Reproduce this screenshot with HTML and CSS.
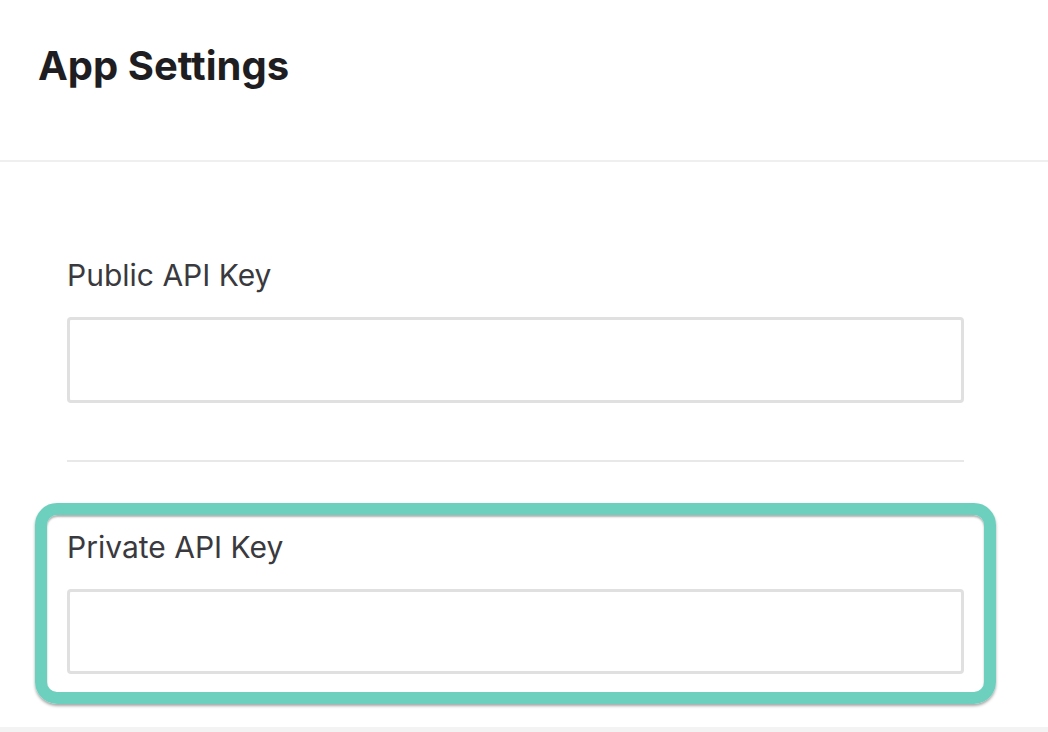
FILE: index.html
```html
<!DOCTYPE html>
<html>
  <head>
    <meta name="viewport" content="width=device-width, initial-scale=1">
    <title>App Settings</title>
    <link rel="stylesheet" href="styles.css">
  </head>
<body>
  <div class="page">

    <div class="header">
      <h1 class="title">App Settings</h1>
    </div>

    <div class="content">
      <div class="field">
        <label class="fieldlabel" for="publickey">Public API Key</label>
        <input class="fieldinput" id="publickey" type="text">
      </div>

      <div class="divider"></div>

      <div class="field focused">
        <label class="fieldlabel" for="privatekey">Private API Key</label>
        <input class="fieldinput" id="privatekey" type="text">
      </div>
    </div>

    <div class="footer"></div>

  </div>
</body>
</html>
```

FILE: styles.css
```css
body, html {margin: 0; padding: 0; background-color: white;}

.page {
  display: flex;
  flex-direction: column;
  height: 732px;
  font-family: Inter, "Liberation Sans", sans-serif;
}

.header {
  box-sizing: border-box;
  height: 162px;
  padding: 46px 38px 0;
  border-bottom: 2px solid #efefef;
}

.title {
  margin: 0;
  font-size: 40px;
  line-height: 40px;
  font-weight: 700;
  color: #1e1e22;
}

.content {
  display: flex;
  flex-direction: column;
  padding: 98px 84px 0 67px;
}

.field {
  display: flex;
  flex-direction: column;
}

.fieldlabel {
  font-size: 30px;
  line-height: 30px;
  color: #3a3a3e;
}

.fieldinput {
  box-sizing: border-box;
  height: 86px;
  margin-top: 27px;
  border: 3px solid #e0e0e0;
  border-radius: 4px;
  background-color: white;
  outline: none;
}

.divider {
  height: 2px;
  margin: 57px 0 41px;
  background-color: #e8e8e8;
}

.focused {
  margin: 0 -32px;
  padding: 17px 20px 18px;
  border: 12px solid #6dcfbd;
  border-radius: 22px;
  box-shadow: 0 2px 3px rgba(0, 0, 0, 0.35), inset 0 2px 2px rgba(0, 0, 0, 0.3);
}

.focused .fieldinput {
  height: 85px;
}

.footer {
  margin-top: auto;
  height: 5px;
  background-color: #f3f3f3;
}
```
